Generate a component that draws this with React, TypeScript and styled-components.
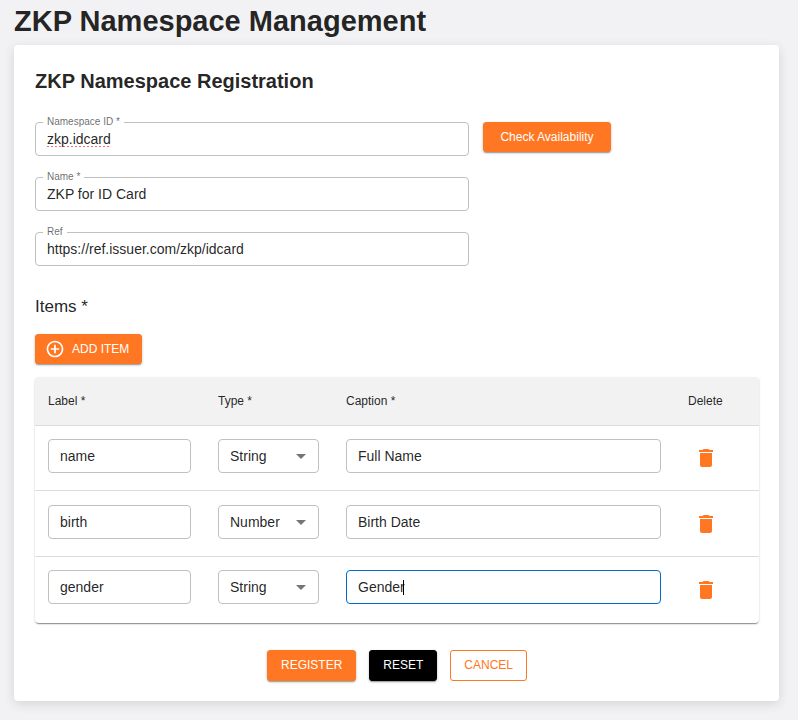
import React, { useState } from "react";
import styled, { createGlobalStyle, css } from "styled-components";

const color = {
  accent: "#ff7722",
  text: "rgba(0, 0, 0, 0.87)",
  muted: "rgba(0, 0, 0, 0.6)",
  outline: "#c0c0c0",
  focus: "#006dc8",
  line: "#dcdcdc",
};

const raised =
  "0 2px 1px -1px rgba(0,0,0,.2), 0 1px 2px 0 rgba(0,0,0,.16), 0 1px 3px 0 rgba(0,0,0,.14)";

const GlobalStyle = createGlobalStyle`
  *, *::before, *::after { box-sizing: border-box; }
  body {
    margin: 0;
    min-height: 100vh;
    background: #f2f2f4;
    color: ${color.text};
    font-family: "Liberation Sans", Arial, sans-serif;
  }
  input, select, button { font: inherit; color: inherit; }
`;

const Page = styled.main`
  padding: 0 19px 19px 14px;
`;

const PageTitle = styled.h1`
  margin: 0 0 3px;
  font-size: 29px;
  line-height: 42px;
  font-weight: 700;
`;

const Card = styled.section`
  padding: 20px 20px 20px 21px;
  border-radius: 4px;
  background: #fff;
  box-shadow: 0 3px 12px rgba(0, 0, 0, 0.12);
`;

const CardTitle = styled.h2`
  margin: 0 0 25px;
  font-size: 20px;
  line-height: 32px;
  font-weight: 700;
`;

const Fields = styled.div`
  display: flex;
  flex-direction: column;
  gap: 21px;
`;

const FieldRow = styled.div`
  display: flex;
  align-items: flex-start;
  gap: 14px;
`;

const Field = styled.div`
  position: relative;
  width: 60%;
`;

const FieldLabel = styled.label`
  position: absolute;
  top: -6px;
  left: 8px;
  padding: 0 4px;
  background: #fff;
  color: ${color.muted};
  font-size: 10px;
  line-height: 12px;
`;

const TextInput = styled.input<{ $misspelled?: boolean; $active?: boolean }>`
  display: block;
  width: 100%;
  height: 34px;
  padding: 0 11px;
  border: 1px solid ${(p) => (p.$active ? color.focus : color.outline)};
  border-radius: 4px;
  background: #fff;
  font-size: 14px;
  outline: none;
  &:focus {
    border-color: ${color.focus};
  }
  ${(p) =>
    p.$misspelled &&
    css`
      text-decoration: underline dotted #ff6b6b 2px;
      text-underline-offset: 2px;
      text-decoration-skip-ink: none;
    `}
`;

const Button = styled.button<{ $tone?: "accent" | "dark" | "outline" }>`
  display: inline-flex;
  align-items: center;
  justify-content: center;
  gap: 7px;
  height: 31px;
  padding: 0 13px 1px;
  border: 1px solid ${color.accent};
  border-radius: 3px;
  background: ${color.accent};
  color: #fff;
  font-size: 12px;
  line-height: 20px;
  white-space: nowrap;
  box-shadow: ${raised};
  cursor: pointer;
  ${(p) =>
    p.$tone === "dark" &&
    css`
      background: #000;
      border-color: #000;
    `}
  ${(p) =>
    p.$tone === "outline" &&
    css`
      background: #fff;
      color: ${color.accent};
      box-shadow: none;
    `}
`;

const CheckButton = styled(Button)`
  height: 30px;
  padding: 0 16px;
`;

const AddButton = styled(Button)`
  display: flex;
  height: 30px;
  padding: 0 12px 0 9px;
`;

const SectionTitle = styled.h3`
  margin: 29px 0 15px;
  font-size: 17px;
  line-height: 24px;
  font-weight: 400;
`;

const TableFrame = styled.div`
  margin: 13px 0 27px;
  border-radius: 4px;
  overflow: hidden;
  box-shadow: 0 2px 1px -1px rgba(0, 0, 0, 0.3), 0 1px 2px rgba(0, 0, 0, 0.24);
`;

const Table = styled.table`
  width: 100%;
  table-layout: fixed;
  border-collapse: separate;
  border-spacing: 0;
`;

const LabelCol = styled.col`
  width: 170px;
`;
const TypeCol = styled.col`
  width: 128px;
`;
const CaptionCol = styled.col``;
const DeleteCol = styled.col`
  width: 84px;
`;

const HeadCell = styled.th`
  height: 49px;
  padding: 0 13px;
  border-bottom: 1px solid ${color.line};
  background: #f2f2f2;
  font-size: 12px;
  font-weight: 400;
  text-align: left;
`;

const Cell = styled.td`
  height: 66px;
  padding: 13px 14px 0 13px;
  border-bottom: 1px solid ${color.line};
  vertical-align: top;
  tr:first-child > & {
    height: 65px;
  }
  tr:nth-child(2) > & {
    padding-top: 14px;
  }
  tr:last-child > & {
    border-bottom: 0;
  }
`;

const DeleteCell = styled.td`
  padding: 0 35px 0 13px;
  border-bottom: 1px solid ${color.line};
  text-align: center;
  vertical-align: middle;
  tr:last-child > & {
    border-bottom: 0;
  }
`;

const Overlay = styled.div`
  position: relative;
`;

const Caret = styled.span`
  position: absolute;
  top: 10px;
  left: 57px;
  width: 1px;
  height: 15px;
  background: #000;
`;

const Select = styled.select`
  display: block;
  width: 100%;
  height: 34px;
  padding: 0 24px 1px 11px;
  border: 1px solid ${color.outline};
  border-radius: 4px;
  background: #fff;
  font-size: 14px;
  appearance: none;
  outline: none;
`;

const Arrow = styled.svg`
  position: absolute;
  top: 5px;
  right: 6px;
  width: 24px;
  height: 24px;
  fill: rgba(0, 0, 0, 0.54);
  pointer-events: none;
`;

const IconButton = styled.button`
  display: inline-flex;
  padding: 0;
  border: 0;
  background: none;
  color: ${color.accent};
  vertical-align: middle;
  cursor: pointer;
`;

const Actions = styled.div`
  display: flex;
  justify-content: center;
  gap: 13px;
`;

const AddIcon = () => (
  <svg width="20" height="20" viewBox="0 0 24 24" fill="currentColor" aria-hidden="true">
    <path d="M13 7h-2v4H7v2h4v4h2v-4h4v-2h-4V7zm-1-5C6.480 2 2 6.480 2 12s4.480 10 10 10 10-4.480 10-10S17.520 2 12 2zm0 18c-4.410 0-8-3.590-8-8s3.590-8 8-8 8 3.590 8 8-3.590 8-8 8z" />
  </svg>
);

const TrashIcon = () => (
  <svg width="24" height="24" viewBox="0 0 24 24" fill="currentColor" aria-hidden="true">
    <path d="M6 19c0 1.100.900 2 2 2h8c1.100 0 2-.900 2-2V7H6v12zM19 4h-3.500l-1-1h-5l-1 1H5v2h14V4z" />
  </svg>
);

type Item = { label: string; type: string; caption: string };

const initialItems: Item[] = [
  { label: "name", type: "String", caption: "Full Name" },
  { label: "birth", type: "Number", caption: "Birth Date" },
  { label: "gender", type: "String", caption: "Gender" },
];

export default function App() {
  const [items, setItems] = useState(initialItems);
  const [editing, setEditing] = useState(2);

  const update = (index: number, patch: Partial<Item>) =>
    setItems(items.map((it, i) => (i === index ? { ...it, ...patch } : it)));

  return (
    <>
      <GlobalStyle />
      <Page>
        <PageTitle>ZKP Namespace Management</PageTitle>
        <Card>
          <CardTitle>ZKP Namespace Registration</CardTitle>
          <Fields>
            <FieldRow>
              <Field>
                <TextInput id="namespace" defaultValue="zkp.idcard" spellCheck={false} $misspelled />
                <FieldLabel htmlFor="namespace">Namespace ID *</FieldLabel>
              </Field>
              <CheckButton type="button">Check Availability</CheckButton>
            </FieldRow>
            <Field>
              <TextInput id="name" defaultValue="ZKP for ID Card" />
              <FieldLabel htmlFor="name">Name *</FieldLabel>
            </Field>
            <Field>
              <TextInput id="ref" defaultValue="https://ref.issuer.com/zkp/idcard" />
              <FieldLabel htmlFor="ref">Ref</FieldLabel>
            </Field>
          </Fields>

          <SectionTitle>Items *</SectionTitle>
          <AddButton
            type="button"
            onClick={() => setItems([...items, { label: "", type: "String", caption: "" }])}
          >
            <AddIcon />
            ADD ITEM
          </AddButton>

          <TableFrame>
            <Table>
              <colgroup>
                <LabelCol />
                <TypeCol />
                <CaptionCol />
                <DeleteCol />
              </colgroup>
              <thead>
                <tr>
                  <HeadCell scope="col">Label *</HeadCell>
                  <HeadCell scope="col">Type *</HeadCell>
                  <HeadCell scope="col">Caption *</HeadCell>
                  <HeadCell scope="col">Delete</HeadCell>
                </tr>
              </thead>
              <tbody>
                {items.map((item, i) => (
                  <tr key={i}>
                    <Cell>
                      <TextInput
                        aria-label="Label"
                        value={item.label}
                        onChange={(e) => update(i, { label: e.target.value })}
                      />
                    </Cell>
                    <Cell>
                      <Overlay>
                        <Select
                          aria-label="Type"
                          value={item.type}
                          onChange={(e) => update(i, { type: e.target.value })}
                        >
                          <option>String</option>
                          <option>Number</option>
                        </Select>
                        <Arrow viewBox="0 0 24 24" aria-hidden="true">
                          <path d="M7 10l5 5 5-5z" />
                        </Arrow>
                      </Overlay>
                    </Cell>
                    <Cell>
                      <Overlay>
                        <TextInput
                          aria-label="Caption"
                          value={item.caption}
                          $active={editing === i}
                          onFocus={() => setEditing(-1)}
                          onChange={(e) => update(i, { caption: e.target.value })}
                        />
                        {editing === i && <Caret />}
                      </Overlay>
                    </Cell>
                    <DeleteCell>
                      <IconButton
                        type="button"
                        aria-label="Delete item"
                        onClick={() => setItems(items.filter((_, n) => n !== i))}
                      >
                        <TrashIcon />
                      </IconButton>
                    </DeleteCell>
                  </tr>
                ))}
              </tbody>
            </Table>
          </TableFrame>

          <Actions>
            <Button type="button">REGISTER</Button>
            <Button type="button" $tone="dark">RESET</Button>
            <Button type="button" $tone="outline">CANCEL</Button>
          </Actions>
        </Card>
      </Page>
    </>
  );
}
